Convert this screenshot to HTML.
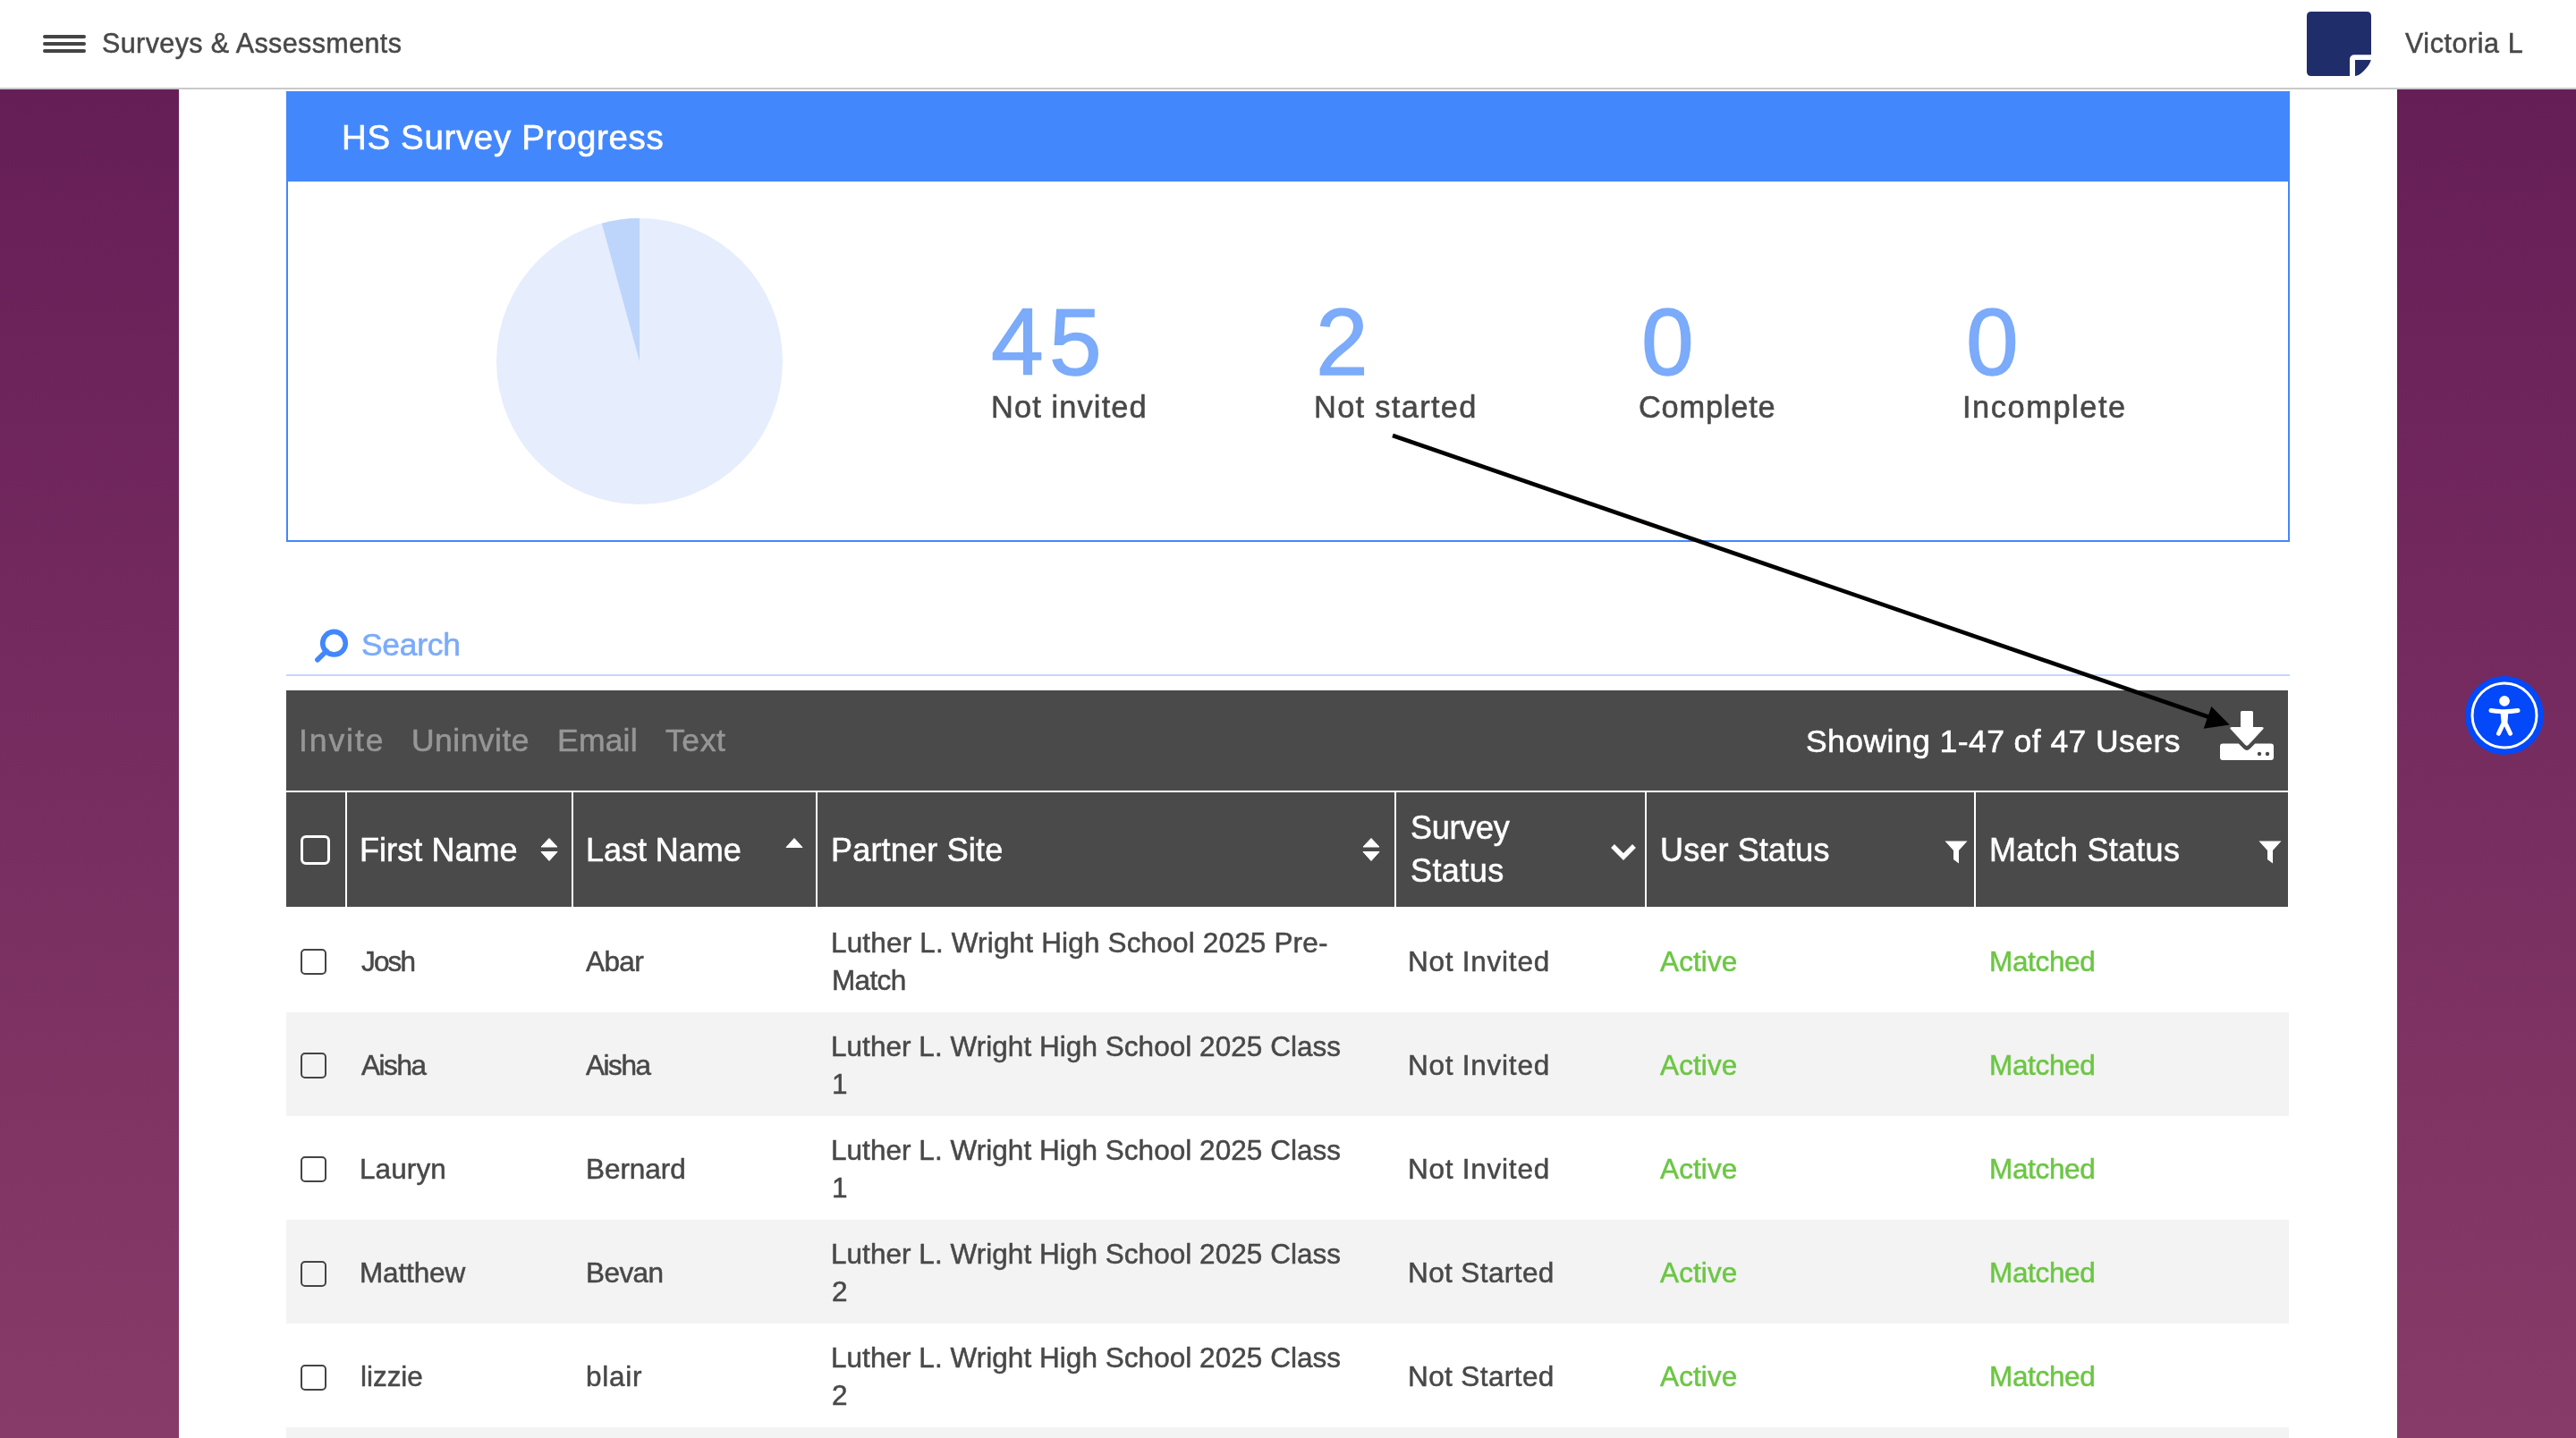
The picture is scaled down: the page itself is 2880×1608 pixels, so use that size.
<!DOCTYPE html>
<html><head><meta charset="utf-8"><title>Surveys &amp; Assessments</title><style>
*{box-sizing:border-box}
html,body{margin:0;padding:0}
body{width:2880px;height:1608px;overflow:hidden;position:relative;font-family:"Liberation Sans",sans-serif;
 background:linear-gradient(180deg,#641C56 0px,#873B68 1608px)}
.abs{position:absolute}
.tx{position:absolute;white-space:nowrap;line-height:1;font-family:"Liberation Sans",sans-serif;-webkit-text-stroke-color:currentColor;will-change:transform}
</style></head><body>
<div class="abs" style="left:0;top:0;width:2880px;height:100px;background:#fff;border-bottom:2px solid #C9C9C9"></div>
<div class="abs" style="left:48px;top:39px;width:48px;height:3.6px;border-radius:2px;background:#444"></div>
<div class="abs" style="left:48px;top:47px;width:48px;height:3.6px;border-radius:2px;background:#444"></div>
<div class="abs" style="left:48px;top:55px;width:48px;height:3.6px;border-radius:2px;background:#444"></div>
<svg class="abs" style="left:2579px;top:13px" width="73" height="73" viewBox="0 0 73 73">
<path d="M5 0H67Q72 0 72 5V48.2H53.5Q48 48.2 48 53.7V72H5Q0 72 0 67V5Q0 0 5 0Z" fill="#1F2D6A"/>
<path d="M54 54H71.8Q70.5 59.5 63.5 66.5Q58.5 71.5 54 72Z" fill="#1F2D6A"/>
</svg>
<div class="abs" style="left:200px;top:100px;width:2480px;height:1508px;background:#fff"></div>
<div class="abs" style="left:320px;top:102px;width:2240px;height:504px;border:2px solid #4387FD;border-top:none"></div>
<div class="abs" style="left:320px;top:102px;width:2240px;height:101px;background:#4387FD"></div>
<svg class="abs" style="left:555px;top:244px" width="320" height="320" viewBox="0 0 320 320">
<circle cx="160" cy="160" r="160" fill="#E6EDFC"/>
<path d="M160 160L160 0A160 160 0 0 0 117.8 5.67Z" fill="#BDD5FB"/>
</svg>
<svg class="abs" style="left:350px;top:698px" width="45" height="45" viewBox="0 0 45 45">
<circle cx="23.5" cy="21.2" r="12.8" fill="none" stroke="#4387FD" stroke-width="5.6"/>
<line x1="15" y1="30" x2="5" y2="39.8" stroke="#4387FD" stroke-width="5.8" stroke-linecap="round"/>
</svg>
<div class="abs" style="left:320px;top:754px;width:2240px;height:2px;background:#C3D8FB"></div>
<div class="abs" style="left:320px;top:772px;width:2238px;height:111.5px;background:#4A4A4A"></div>
<div class="abs" style="left:320px;top:886px;width:2238px;height:127.5px;background:#4A4A4A"></div>
<div class="abs" style="left:386px;top:886px;width:2px;height:128px;background:#fff"></div>
<div class="abs" style="left:639px;top:886px;width:2px;height:128px;background:#fff"></div>
<div class="abs" style="left:912px;top:886px;width:2px;height:128px;background:#fff"></div>
<div class="abs" style="left:1559px;top:886px;width:2px;height:128px;background:#fff"></div>
<div class="abs" style="left:1839px;top:886px;width:2px;height:128px;background:#fff"></div>
<div class="abs" style="left:2207px;top:886px;width:2px;height:128px;background:#fff"></div>
<div class="abs" style="left:336px;top:1061.2px;width:29px;height:29px;border:2.8px solid #444;border-radius:5px"></div>
<div class="abs" style="left:320px;top:1132.0px;width:2239px;height:116.1px;background:#F3F3F3"></div>
<div class="abs" style="left:336px;top:1177.3px;width:29px;height:29px;border:2.8px solid #444;border-radius:5px"></div>
<div class="abs" style="left:336px;top:1293.4px;width:29px;height:29px;border:2.8px solid #444;border-radius:5px"></div>
<div class="abs" style="left:320px;top:1364.2px;width:2239px;height:116.1px;background:#F3F3F3"></div>
<div class="abs" style="left:336px;top:1409.5px;width:29px;height:29px;border:2.8px solid #444;border-radius:5px"></div>
<div class="abs" style="left:336px;top:1525.6px;width:29px;height:29px;border:2.8px solid #444;border-radius:5px"></div>
<div class="abs" style="left:320px;top:1596.4px;width:2239px;height:116.1px;background:#F3F3F3"></div>
<div class="abs" style="left:336px;top:933.5px;width:33px;height:33px;border:3px solid #fff;border-radius:6px"></div>
<svg class="abs" style="left:603.5px;top:936.5px" width="20" height="27" viewBox="0 0 20 27"><path d="M10 0.5L19 10H1Z M1 15.5H19L10 25.5Z" fill="#fff" stroke="#fff" stroke-width="1" stroke-linejoin="round"/></svg>
<svg class="abs" style="left:1523.3px;top:936.5px" width="20" height="27" viewBox="0 0 20 27"><path d="M10 0.5L19 10H1Z M1 15.5H19L10 25.5Z" fill="#fff" stroke="#fff" stroke-width="1" stroke-linejoin="round"/></svg>
<svg class="abs" style="left:877.5px;top:936.5px" width="20" height="12" viewBox="0 0 20 12"><path d="M10 0.5L19 10.5H1Z" fill="#fff" stroke="#fff" stroke-width="1" stroke-linejoin="round"/></svg>
<svg class="abs" style="left:1800px;top:942px" width="30" height="22" viewBox="0 0 30 22"><path d="M3 4L15 16L27 4" fill="none" stroke="#fff" stroke-width="5.5"/></svg>
<svg class="abs" style="left:2173.5px;top:940px" width="26" height="26" viewBox="0 0 26 26"><path d="M0.5 0.5H25.5L16 11V25.5L10 21V11Z" fill="#fff"/></svg>
<svg class="abs" style="left:2524.5px;top:940px" width="26" height="26" viewBox="0 0 26 26"><path d="M0.5 0.5H25.5L16 11V25.5L10 21V11Z" fill="#fff"/></svg>
<svg class="abs" style="left:2482px;top:794px" width="61" height="57" viewBox="0 0 61 57">
<path d="M23 2.5Q23 1 24.5 1H35.5Q37 1 37 2.5V19H46.5Q50 19 48 21.5L32 38.8Q30 41 28 38.8L12 21.5Q10 19 13.5 19H23Z" fill="#fff"/>
<path d="M3 37.5H20.8L26.5 43.2Q30 46.7 33.5 43.2L39.2 37.5H57Q60 37.5 60 40.5V53Q60 56 57 56H3Q0 56 0 53V40.5Q0 37.5 3 37.5Z" fill="#fff"/>
<circle cx="44" cy="49" r="2.2" fill="#4A4A4A"/><circle cx="53" cy="49" r="2.2" fill="#4A4A4A"/>
</svg>
<svg class="abs" style="left:2756px;top:756px" width="88" height="88" viewBox="0 0 88 88">
<circle cx="44" cy="44" r="44" fill="#0348F9"/>
<circle cx="44" cy="44" r="36" fill="none" stroke="#fff" stroke-width="3"/>
<circle cx="44" cy="27.8" r="5.9" fill="#fff"/>
<path d="M29 38.5Q44 40.8 59 38.5" fill="none" stroke="#fff" stroke-width="5" stroke-linecap="round"/>
<path d="M39.5 40.5H48.3L47.2 55H40.8Z" fill="#fff"/>
<path d="M42.3 54L37.5 64.2M45.7 54L50.5 64.2" fill="none" stroke="#fff" stroke-width="5" stroke-linecap="round"/>
</svg>
<span id="t0" class="tx" style="left:113.50px;top:32.80px;font-size:30.5px;color:#484848;letter-spacing:0.390px;-webkit-text-stroke:0.49px">Surveys &amp; Assessments</span>
<span id="t1" class="tx" style="left:2689.00px;top:33.30px;font-size:30.5px;color:#484848;letter-spacing:0.556px;-webkit-text-stroke:0.49px">Victoria L</span>
<span id="t2" class="tx" style="left:382.10px;top:134.80px;font-size:38.5px;color:#fff;letter-spacing:0.647px;-webkit-text-stroke:0.62px">HS Survey Progress</span>
<span id="t3" class="tx" style="left:1108.20px;top:330.19px;font-size:105.5px;color:#7BABFA;letter-spacing:6.400px;-webkit-text-stroke:1.40px">45</span>
<span id="t4" class="tx" style="left:1471.00px;top:330.19px;font-size:105.5px;color:#7BABFA;letter-spacing:0.000px;-webkit-text-stroke:1.40px">2</span>
<span id="t5" class="tx" style="left:1835.20px;top:330.19px;font-size:105.5px;color:#7BABFA;letter-spacing:0.000px;-webkit-text-stroke:1.40px">0</span>
<span id="t6" class="tx" style="left:2197.80px;top:330.19px;font-size:105.5px;color:#7BABFA;letter-spacing:0.000px;-webkit-text-stroke:1.40px">0</span>
<span id="t7" class="tx" style="left:1107.70px;top:437.90px;font-size:34.4px;color:#484848;letter-spacing:1.120px;-webkit-text-stroke:0.55px">Not invited</span>
<span id="t8" class="tx" style="left:1468.90px;top:437.90px;font-size:34.4px;color:#484848;letter-spacing:1.320px;-webkit-text-stroke:0.55px">Not started</span>
<span id="t9" class="tx" style="left:1832.40px;top:437.90px;font-size:34.4px;color:#484848;letter-spacing:0.771px;-webkit-text-stroke:0.55px">Complete</span>
<span id="t10" class="tx" style="left:2194.00px;top:437.90px;font-size:34.4px;color:#484848;letter-spacing:1.556px;-webkit-text-stroke:0.55px">Incomplete</span>
<span id="t11" class="tx" style="left:403.90px;top:704.40px;font-size:35.5px;color:#7BABFA;letter-spacing:-0.320px;-webkit-text-stroke:0.57px">Search</span>
<span id="t12" class="tx" style="left:333.90px;top:811.00px;font-size:35.5px;color:#969696;letter-spacing:1.920px;-webkit-text-stroke:0.57px">Invite</span>
<span id="t13" class="tx" style="left:460.20px;top:811.00px;font-size:35.5px;color:#969696;letter-spacing:0.457px;-webkit-text-stroke:0.57px">Uninvite</span>
<span id="t14" class="tx" style="left:623.00px;top:811.00px;font-size:35.5px;color:#969696;letter-spacing:0.200px;-webkit-text-stroke:0.57px">Email</span>
<span id="t15" class="tx" style="left:744.20px;top:811.00px;font-size:35.5px;color:#969696;letter-spacing:0.600px;-webkit-text-stroke:0.57px">Text</span>
<span id="t16" class="tx" style="left:2019.00px;top:811.60px;font-size:35.5px;color:#fff;letter-spacing:0.435px;-webkit-text-stroke:0.57px">Showing 1-47 of 47 Users</span>
<span id="t17" class="tx" style="left:402.00px;top:932.70px;font-size:36px;color:#fff;letter-spacing:0.067px;-webkit-text-stroke:0.58px">First Name</span>
<span id="t18" class="tx" style="left:655.10px;top:932.70px;font-size:36px;color:#fff;letter-spacing:-0.050px;-webkit-text-stroke:0.58px">Last Name</span>
<span id="t19" class="tx" style="left:929.00px;top:932.70px;font-size:36px;color:#fff;letter-spacing:0.200px;-webkit-text-stroke:0.58px">Partner Site</span>
<span id="t20" class="tx" style="left:1855.80px;top:932.70px;font-size:36px;color:#fff;letter-spacing:0.140px;-webkit-text-stroke:0.58px">User Status</span>
<span id="t21" class="tx" style="left:2223.80px;top:932.70px;font-size:36px;color:#fff;letter-spacing:0.255px;-webkit-text-stroke:0.58px">Match Status</span>
<span id="t22" class="tx" style="left:1576.80px;top:908.40px;font-size:36px;color:#fff;letter-spacing:-0.240px;-webkit-text-stroke:0.58px">Survey</span>
<span id="t23" class="tx" style="left:1576.80px;top:956.30px;font-size:36px;color:#fff;letter-spacing:0.420px;-webkit-text-stroke:0.58px">Status</span>
<span id="t24" class="tx" style="left:403.60px;top:1059.50px;font-size:31.5px;color:#484848;letter-spacing:-1.833px;-webkit-text-stroke:0.50px">Josh</span>
<span id="t25" class="tx" style="left:655.40px;top:1059.50px;font-size:31.5px;color:#484848;letter-spacing:-0.633px;-webkit-text-stroke:0.50px">Abar</span>
<span id="t26" class="tx" style="left:929.10px;top:1038.70px;font-size:31.5px;color:#484848;letter-spacing:0.168px;-webkit-text-stroke:0.50px">Luther L. Wright High School 2025 Pre-</span>
<span id="t27" class="tx" style="left:930.10px;top:1081.00px;font-size:31.5px;color:#484848;letter-spacing:-0.650px;-webkit-text-stroke:0.50px">Match</span>
<span id="t28" class="tx" style="left:1574.40px;top:1059.50px;font-size:31.5px;color:#484848;letter-spacing:0.760px;-webkit-text-stroke:0.50px">Not Invited</span>
<span id="t29" class="tx" style="left:1855.70px;top:1059.50px;font-size:31.5px;color:#6CC644;letter-spacing:0.120px;-webkit-text-stroke:0.50px">Active</span>
<span id="t30" class="tx" style="left:2223.50px;top:1059.50px;font-size:31.5px;color:#6CC644;letter-spacing:-0.333px;-webkit-text-stroke:0.50px">Matched</span>
<span id="t31" class="tx" style="left:403.60px;top:1175.60px;font-size:31.5px;color:#484848;letter-spacing:-1.450px;-webkit-text-stroke:0.50px">Aisha</span>
<span id="t32" class="tx" style="left:655.40px;top:1175.60px;font-size:31.5px;color:#484848;letter-spacing:-1.450px;-webkit-text-stroke:0.50px">Aisha</span>
<span id="t33" class="tx" style="left:929.10px;top:1154.80px;font-size:31.5px;color:#484848;letter-spacing:0.042px;-webkit-text-stroke:0.50px">Luther L. Wright High School 2025 Class</span>
<span id="t34" class="tx" style="left:930.10px;top:1197.10px;font-size:31.5px;color:#484848;letter-spacing:0.000px;-webkit-text-stroke:0.50px">1</span>
<span id="t35" class="tx" style="left:1574.40px;top:1175.60px;font-size:31.5px;color:#484848;letter-spacing:0.760px;-webkit-text-stroke:0.50px">Not Invited</span>
<span id="t36" class="tx" style="left:1855.70px;top:1175.60px;font-size:31.5px;color:#6CC644;letter-spacing:0.120px;-webkit-text-stroke:0.50px">Active</span>
<span id="t37" class="tx" style="left:2223.50px;top:1175.60px;font-size:31.5px;color:#6CC644;letter-spacing:-0.333px;-webkit-text-stroke:0.50px">Matched</span>
<span id="t38" class="tx" style="left:401.60px;top:1291.70px;font-size:31.5px;color:#484848;letter-spacing:0.100px;-webkit-text-stroke:0.50px">Lauryn</span>
<span id="t39" class="tx" style="left:655.40px;top:1291.70px;font-size:31.5px;color:#484848;letter-spacing:-0.050px;-webkit-text-stroke:0.50px">Bernard</span>
<span id="t40" class="tx" style="left:929.10px;top:1270.90px;font-size:31.5px;color:#484848;letter-spacing:0.042px;-webkit-text-stroke:0.50px">Luther L. Wright High School 2025 Class</span>
<span id="t41" class="tx" style="left:930.10px;top:1313.20px;font-size:31.5px;color:#484848;letter-spacing:0.000px;-webkit-text-stroke:0.50px">1</span>
<span id="t42" class="tx" style="left:1574.40px;top:1291.70px;font-size:31.5px;color:#484848;letter-spacing:0.760px;-webkit-text-stroke:0.50px">Not Invited</span>
<span id="t43" class="tx" style="left:1855.70px;top:1291.70px;font-size:31.5px;color:#6CC644;letter-spacing:0.120px;-webkit-text-stroke:0.50px">Active</span>
<span id="t44" class="tx" style="left:2223.50px;top:1291.70px;font-size:31.5px;color:#6CC644;letter-spacing:-0.333px;-webkit-text-stroke:0.50px">Matched</span>
<span id="t45" class="tx" style="left:401.60px;top:1407.80px;font-size:31.5px;color:#484848;letter-spacing:-0.150px;-webkit-text-stroke:0.50px">Matthew</span>
<span id="t46" class="tx" style="left:655.40px;top:1407.80px;font-size:31.5px;color:#484848;letter-spacing:-0.575px;-webkit-text-stroke:0.50px">Bevan</span>
<span id="t47" class="tx" style="left:929.10px;top:1387.00px;font-size:31.5px;color:#484848;letter-spacing:0.042px;-webkit-text-stroke:0.50px">Luther L. Wright High School 2025 Class</span>
<span id="t48" class="tx" style="left:930.10px;top:1429.30px;font-size:31.5px;color:#484848;letter-spacing:0.000px;-webkit-text-stroke:0.50px">2</span>
<span id="t49" class="tx" style="left:1574.40px;top:1407.80px;font-size:31.5px;color:#484848;letter-spacing:0.400px;-webkit-text-stroke:0.50px">Not Started</span>
<span id="t50" class="tx" style="left:1855.70px;top:1407.80px;font-size:31.5px;color:#6CC644;letter-spacing:0.120px;-webkit-text-stroke:0.50px">Active</span>
<span id="t51" class="tx" style="left:2223.50px;top:1407.80px;font-size:31.5px;color:#6CC644;letter-spacing:-0.333px;-webkit-text-stroke:0.50px">Matched</span>
<span id="t52" class="tx" style="left:402.60px;top:1523.90px;font-size:31.5px;color:#484848;letter-spacing:-0.040px;-webkit-text-stroke:0.50px">lizzie</span>
<span id="t53" class="tx" style="left:655.40px;top:1523.90px;font-size:31.5px;color:#484848;letter-spacing:0.750px;-webkit-text-stroke:0.50px">blair</span>
<span id="t54" class="tx" style="left:929.10px;top:1503.10px;font-size:31.5px;color:#484848;letter-spacing:0.042px;-webkit-text-stroke:0.50px">Luther L. Wright High School 2025 Class</span>
<span id="t55" class="tx" style="left:930.10px;top:1545.40px;font-size:31.5px;color:#484848;letter-spacing:0.000px;-webkit-text-stroke:0.50px">2</span>
<span id="t56" class="tx" style="left:1574.40px;top:1523.90px;font-size:31.5px;color:#484848;letter-spacing:0.400px;-webkit-text-stroke:0.50px">Not Started</span>
<span id="t57" class="tx" style="left:1855.70px;top:1523.90px;font-size:31.5px;color:#6CC644;letter-spacing:0.120px;-webkit-text-stroke:0.50px">Active</span>
<span id="t58" class="tx" style="left:2223.50px;top:1523.90px;font-size:31.5px;color:#6CC644;letter-spacing:-0.333px;-webkit-text-stroke:0.50px">Matched</span>
<svg class="abs" style="left:0;top:0" width="2880" height="1608" viewBox="0 0 2880 1608">
<line x1="1557" y1="487" x2="2470" y2="802" stroke="#000" stroke-width="4.7"/>
<path d="M2492.7 810.4L2472.4 790L2463.7 814.8Z" fill="#000"/>
</svg>
</body></html>
